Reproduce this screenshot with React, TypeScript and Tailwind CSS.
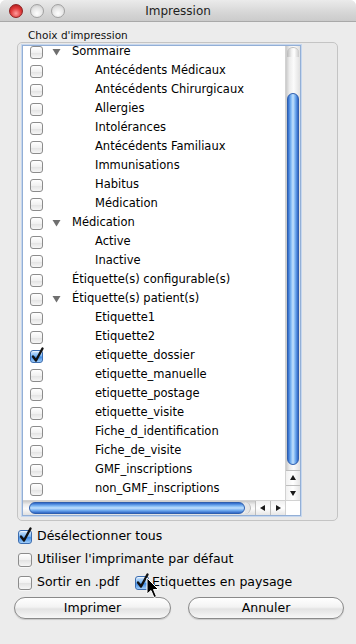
import React from "react";

interface Row {
  label: string;
  level: 0 | 1;
  open?: boolean;
  checked?: boolean;
}

const rows: Row[] = [
  { label: "Sommaire", level: 0, open: true },
  { label: "Antécédents Médicaux", level: 1 },
  { label: "Antécédents Chirurgicaux", level: 1 },
  { label: "Allergies", level: 1 },
  { label: "Intolérances", level: 1 },
  { label: "Antécédents Familiaux", level: 1 },
  { label: "Immunisations", level: 1 },
  { label: "Habitus", level: 1 },
  { label: "Médication", level: 1 },
  { label: "Médication", level: 0, open: true },
  { label: "Active", level: 1 },
  { label: "Inactive", level: 1 },
  { label: "Étiquette(s) configurable(s)", level: 0 },
  { label: "Étiquette(s) patient(s)", level: 0, open: true },
  { label: "Etiquette1", level: 1 },
  { label: "Etiquette2", level: 1 },
  { label: "etiquette_dossier", level: 1, checked: true },
  { label: "etiquette_manuelle", level: 1 },
  { label: "etiquette_postage", level: 1 },
  { label: "etiquette_visite", level: 1 },
  { label: "Fiche_d_identification", level: 1 },
  { label: "Fiche_de_visite", level: 1 },
  { label: "GMF_inscriptions", level: 1 },
  { label: "non_GMF_inscriptions", level: 1 },
];

const Checkbox: React.FC<{ checked?: boolean; size?: "sm" | "md" }> = ({ checked, size = "sm" }) => {
  const dim = size === "sm" ? "w-[13px] h-[13px]" : "w-[14px] h-[14px]";
  if (checked) {
    return (
      <div
        className={`${dim} relative shrink-0 rounded-[3px] border border-[#3c6db0] bg-[linear-gradient(#cfe6fd,#79b5f3_45%,#3d8ae6_55%,#9fcdf9)] shadow-[inset_0_1px_1px_rgba(255,255,255,0.7)]`}
      >
        <svg className="absolute -left-[1px] -top-[4px] overflow-visible" width="16" height="17" viewBox="0 0 16 17">
          <path d="M3 9.5 L6 13.5 L12.5 1.5" fill="none" stroke="#111" strokeWidth="2.4" strokeLinecap="round" strokeLinejoin="round" />
        </svg>
      </div>
    );
  }
  return (
    <div
      className={`${dim} shrink-0 rounded-[3px] border border-[#8c8c8c] bg-[linear-gradient(#ffffff,#f1f1f1_50%,#e2e2e2_51%,#f6f6f6)] shadow-[0_1px_0_rgba(255,255,255,0.6)]`}
    />
  );
};

const Triangle = () => (
  <svg width="9" height="8" viewBox="0 0 9 8">
    <path d="M0.5 1 L8.5 1 L4.5 7.5 Z" fill="#6f6f6f" />
  </svg>
);

const Arrow: React.FC<{ dir: "up" | "down" | "left" | "right" }> = ({ dir }) => {
  const d = {
    up: "M1 6 L7 6 L4 1 Z",
    down: "M1 2 L7 2 L4 7 Z",
    left: "M6 1 L6 7 L1 4 Z",
    right: "M2 1 L2 7 L7 4 Z",
  }[dir];
  return (
    <svg width="8" height="8" viewBox="0 0 8 8">
      <path d={d} fill="#1a1a1a" />
    </svg>
  );
};

const App: React.FC = () => {
  return (
    <div className="w-[356px] h-[644px] bg-white font-['DejaVu_Sans',sans-serif] text-black relative overflow-hidden">
      <div className="h-full rounded-t-[6px] bg-[#ececec] flex flex-col overflow-hidden">
        {/* title bar */}
        <div className="h-[22px] shrink-0 relative flex items-center pl-[9px] gap-[7px] bg-[linear-gradient(#ebebeb,#d6d6d6_60%,#cbcbcb)] border-b border-[#a9a9a9]">
          <div className="w-[14px] h-[14px] rounded-full border border-[#8d2020] bg-[radial-gradient(circle_at_50%_70%,#ff9d9d,#e03b3b_50%,#a51414)]" />
          <div className="w-[14px] h-[14px] rounded-full border border-[#a0a0a0] bg-[radial-gradient(circle_at_50%_70%,#ffffff,#e4e4e4_55%,#c2c2c2)]" />
          <div className="w-[14px] h-[14px] rounded-full border border-[#a0a0a0] bg-[radial-gradient(circle_at_50%_70%,#ffffff,#e4e4e4_55%,#c2c2c2)]" />
          <div className="absolute inset-0 flex items-center justify-center text-[12px] text-[#1e1e1e]">
            Impression
          </div>
        </div>

        <div className="pl-[28px] mt-[7px] text-[10.5px] leading-[13px] text-[#111]">Choix d'impression</div>

        {/* group box */}
        <div className="ml-[17px] w-[321px] h-[479px] rounded-[5px] border border-[#c4c4c4] bg-[#e9e9e9] pl-[4px] pt-[2px]">
          <div className="w-[279px] h-[471px] border border-[#93afd6] shadow-[0_0_0_1px_#c6d7ee] bg-white flex flex-col">
            <div className="flex flex-1 min-h-0">
              {/* list content */}
              <div className="flex-1 overflow-hidden">
                <div className="-mt-[3.5px]">
                  {rows.map((r, i) => (
                    <div key={i} className="h-[19px] flex items-center pl-[7px] text-[11.5px] whitespace-nowrap">
                      <Checkbox checked={r.checked} />
                      <div className="w-[29px] shrink-0 flex justify-center pr-[2px]">{r.open ? <Triangle /> : null}</div>
                      <span className={r.level === 1 ? "ml-[23px]" : ""}>{r.label}</span>
                    </div>
                  ))}
                </div>
              </div>
              {/* vertical scrollbar */}
              <div className="w-[15px] flex flex-col border-l border-[#d2d2d2]">
                <div className="flex-1 relative bg-[linear-gradient(to_right,#c9c9c9,#ececec_25%,#fbfbfb_55%,#e0e0e0)] pt-[47px] px-[1px]">
                  <div className="absolute top-[1px] left-[1px] right-[1px] h-[10px] rounded-t-full bg-[linear-gradient(to_right,#b8b8b8,#f2f2f2_40%,#ffffff_60%,#c9c9c9)] border-t border-[#bdbdbd]" />
                  <div className="h-[372px] rounded-full border border-[#2f5fae] bg-[linear-gradient(to_right,#2d68c9,#80b9f5_30%,#c2e1fd_50%,#6ea9ee_75%,#2f66c5)]" />
                </div>
                <div className="h-[15px] flex items-center justify-center border-t border-[#bdbdbd] bg-[linear-gradient(to_right,#f0f0f0,#ffffff_50%,#e6e6e6)]">
                  <Arrow dir="up" />
                </div>
                <div className="h-[15px] flex items-center justify-center border-t border-[#bdbdbd] bg-[linear-gradient(to_right,#f0f0f0,#ffffff_50%,#e6e6e6)]">
                  <Arrow dir="down" />
                </div>
              </div>
            </div>
            {/* horizontal scrollbar */}
            <div className="h-[15px] flex border-t border-[#d2d2d2]">
              <div className="flex-1 flex items-stretch py-[1px] pl-[6px] bg-[linear-gradient(#c9c9c9,#ececec_25%,#fbfbfb_55%,#e0e0e0)]">
                <div className="w-[216px] rounded-full border border-[#2f5fae] bg-[linear-gradient(#2d68c9,#80b9f5_30%,#c2e1fd_50%,#6ea9ee_75%,#2f66c5)]" />
                <div className="w-[6px] rounded-r-full border-r border-[#bdbdbd] bg-[#e6e6e6]" />
              </div>
              <div className="w-[15px] flex items-center justify-center border-l border-[#bdbdbd] bg-[linear-gradient(#f0f0f0,#ffffff_50%,#e6e6e6)]">
                <Arrow dir="left" />
              </div>
              <div className="w-[15px] flex items-center justify-center border-l border-[#bdbdbd] bg-[linear-gradient(#f0f0f0,#ffffff_50%,#e6e6e6)]">
                <Arrow dir="right" />
              </div>
              <div className="w-[15px] bg-white border-l border-[#d2d2d2]" />
            </div>
          </div>
        </div>

        {/* options */}
        <div className="mt-[4px] pl-[18px] text-[12.5px]">
          <div className="h-[23px] flex items-center gap-[5px]">
            <Checkbox checked size="md" />
            <span>Désélectionner tous</span>
          </div>
          <div className="h-[23px] flex items-center gap-[5px]">
            <Checkbox size="md" />
            <span>Utiliser l'imprimante par défaut</span>
          </div>
          <div className="h-[23px] flex items-center">
            <div className="w-[117px] flex items-center gap-[5px]">
              <Checkbox size="md" />
              <span>Sortir en .pdf</span>
            </div>
            <div className="flex items-center gap-[3px]">
              <Checkbox checked size="md" />
              <span>Etiquettes en paysage</span>
            </div>
          </div>
        </div>

        {/* buttons */}
        <div className="mt-[3px] pl-[14px] flex gap-[17px] text-[12.5px]">
          <button className="w-[157px] h-[22px] rounded-full border border-[#8a8a8a] bg-[linear-gradient(#ffffff,#f3f3f3_45%,#e3e3e3_55%,#f7f7f7)] shadow-[0_1px_1px_rgba(0,0,0,0.15)] flex items-center justify-center">
            Imprimer
          </button>
          <button className="w-[156px] h-[22px] rounded-full border border-[#8a8a8a] bg-[linear-gradient(#ffffff,#f3f3f3_45%,#e3e3e3_55%,#f7f7f7)] shadow-[0_1px_1px_rgba(0,0,0,0.15)] flex items-center justify-center">
            Annuler
          </button>
        </div>
      </div>

      {/* mouse pointer */}
      <svg className="absolute left-[146px] top-[577px]" width="14" height="22" viewBox="0 0 14 22">
        <path d="M1 1 L1 17 L5 13.5 L8 20.5 L10.5 19.5 L7.5 12.5 L12.5 12.5 Z" fill="#000" stroke="#fff" strokeWidth="1" strokeLinejoin="round" />
      </svg>
    </div>
  );
};

export default App;
